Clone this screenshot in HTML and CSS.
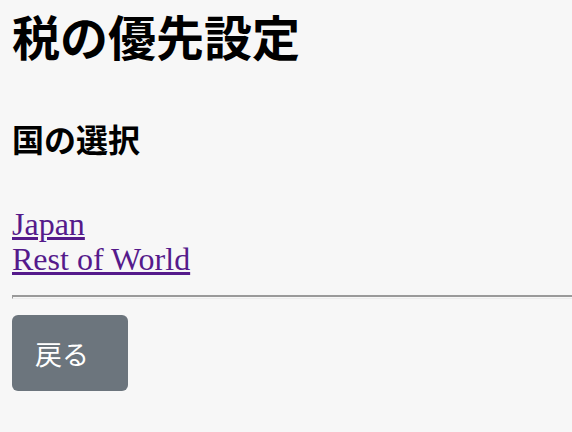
FILE: index.html
```html
<!DOCTYPE html>
<html lang="ja">

<head>
    <meta charset="UTF-8">
    <meta name="viewport" content="width=device-width, initial-scale=1.0">
    <title>税の優先設定</title>
    <link rel="stylesheet" href="styles.css">
</head>

<body>

    <h1>税の優先設定</h1>

    <h2>国の選択</h2>

    <div class="country-list">
        <a href="#japan">Japan</a><br>
        <a href="#rest-of-world">Rest of World</a>
    </div>

    <hr>

    <button class="btn-back" type="button">戻る</button>

</body>

</html>
```

FILE: styles.css
```css
body {
    font-family: "Liberation Serif", "Noto Sans CJK JP", serif;
    background-color: #f7f7f7;
    color: #000;
    margin: 12px 0 12px 12px;
}

h1 {
    margin: 0;
    font-size: 48px;
    line-height: 56px;
    font-weight: bold;
}

h2 {
    margin: 54px 0 0;
    font-size: 32px;
    line-height: 38px;
    font-weight: bold;
}

.country-list {
    margin-top: 47px;
    font-size: 32px;
    line-height: 35px;
}

.country-list a {
    color: #551a8b;
}

hr {
    margin: 18px 0 0;
    border: none;
    border-top: 2px solid #9a9a9a;
    border-bottom: 1px solid #ececec;
    border-left: 1px solid #9a9a9a;
    height: 1px;
}

.btn-back {
    display: block;
    margin-top: 16px;
    width: 116px;
    height: 76px;
    padding: 0 0 0 23px;
    text-align: left;
    font-family: "Liberation Serif", "Noto Sans CJK JP", serif;
    font-size: 27px;
    color: #fff;
    background-color: #6c757d;
    border: none;
    border-radius: 6px;
    cursor: pointer;
}
```
